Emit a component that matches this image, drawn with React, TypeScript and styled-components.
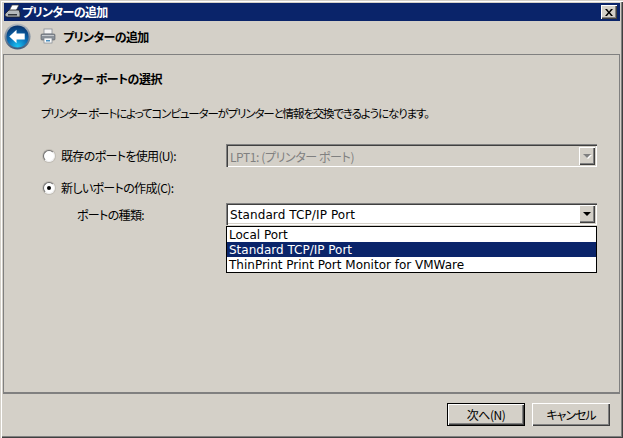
import React from 'react';
import styled, { createGlobalStyle } from 'styled-components';

const UI_FONT = `"Noto Sans CJK JP", "Noto Sans", sans-serif`;
const LATIN_FONT = `"DejaVu Sans", "Noto Sans CJK JP", sans-serif`;

const GlobalStyle = createGlobalStyle`
  html, body {
    margin: 0;
    padding: 0;
    background: #d4d0c8;
  }
  * {
    box-sizing: border-box;
  }
`;

const Window = styled.div`
  width: 623px;
  height: 438px;
  display: flex;
  flex-direction: column;
  padding: 3px 3px 3px 3px;
  background: #d4d0c8;
  box-shadow: inset 1px 1px 0 #d4d0c8, inset 2px 2px 0 #fff, inset -1px -1px 0 #404040, inset -2px -2px 0 #808080;
  font-family: ${UI_FONT};
  font-feature-settings: "palt" 1;
  font-size: 12px;
  letter-spacing: -0.65px;
  color: #000;
  overflow: hidden;
`;

const TitleBar = styled.div`
  height: 18px;
  flex: none;
  margin-left: 1px;
  padding: 0 3px 0 1px;
  background: #0a246a;
  color: #fff;
  display: flex;
  align-items: center;
  gap: 1px;
  font-weight: 700;
  line-height: 18px;
`;

const TitleText = styled.span`
  flex: 1;
`;

const CloseButton = styled.div`
  width: 16px;
  height: 14px;
  background: #d4d0c8;
  box-shadow: inset 1px 1px 0 #fff, inset -1px -1px 0 #404040, inset -2px -2px 0 #808080;
  display: flex;
  align-items: center;
  justify-content: center;
`;

const NavBar = styled.div`
  height: 33px;
  flex: none;
  display: flex;
  align-items: center;
  padding: 0 0 3px 1px;
`;

const NavTitle = styled.span`
  margin-left: 7px;
  font-weight: 700;
`;

const PrinterSlot = styled.div`
  margin-left: 9px;
  display: flex;
`;

const Panel = styled.div`
  flex: none;
  height: 340px;
  border-top: 1px solid #808080;
  border-left: 1px solid #808080;
  border-right: 1px solid #808080;
  border-bottom: 2px solid #808080;
  padding: 15px 0 0 37px;
`;

const Heading = styled.div`
  font-weight: 700;
  line-height: 18px;
  letter-spacing: -0.5px;
`;

const Description = styled.div`
  margin-top: 16px;
  line-height: 18px;
  height: 18px;
  font-size: 11.5px;
  letter-spacing: -1.15px;
  white-space: nowrap;
`;

const Form = styled.div`
  margin-top: 22px;
  display: flex;
  flex-direction: column;
`;

const FormRow = styled.div<{ $gap?: number }>`
  margin-top: ${(p) => p.$gap ?? 0}px;
  display: grid;
  grid-template-columns: 185px 371px;
  align-items: center;
`;

const RadioRow = styled.label`
  display: flex;
  align-items: center;
  gap: 6px;
  padding-left: 2px;
  line-height: 18px;
`;

const RadioCircle = styled.span<{ $checked?: boolean }>`
  width: 12px;
  height: 12px;
  flex: none;
  border-radius: 50%;
  background: #fff;
  border: 1px solid;
  border-color: #707070 #f0f0f0 #f0f0f0 #707070;
  box-shadow: 0 0 0 1px #c0bcb4;
  display: flex;
  align-items: center;
  justify-content: center;

  &::after {
    content: '';
    width: 4px;
    height: 4px;
    border-radius: 50%;
    background: ${(p) => (p.$checked ? '#000' : 'transparent')};
  }
`;

const FieldLabel = styled.div`
  padding: 2px 0 0 36px;
  line-height: 18px;
`;

const ComboWrap = styled.div`
  position: relative;
`;

const Combo = styled.div<{ $disabled?: boolean }>`
  height: ${(p) => (p.$disabled ? 23 : 22)}px;
  display: flex;
  align-items: center;
  padding: 0 2px 0 4px;
  background: ${(p) => (p.$disabled ? '#d4d0c8' : '#fff')};
  color: ${(p) => (p.$disabled ? '#808080' : '#000')};
  box-shadow: inset 1px 1px 0 #808080, inset 2px 2px 0 #404040, inset -1px -1px 0 #fff, inset -2px -2px 0 #d4d0c8;
`;

const ComboText = styled.span<{ $latin?: boolean }>`
  flex: 1;
  padding-top: 1px;
  font-family: ${(p) => (p.$latin ? LATIN_FONT : UI_FONT)};
  letter-spacing: ${(p) => (p.$latin ? '0.1px' : '-0.4px')};
  white-space: nowrap;
`;

const ComboButton = styled.div`
  width: 16px;
  height: 18px;
  background: #d4d0c8;
  box-shadow: inset 1px 1px 0 #fff, inset -1px -1px 0 #404040, inset -2px -2px 0 #808080;
  display: flex;
  align-items: center;
  justify-content: center;
`;

const Arrow = styled.span<{ $disabled?: boolean }>`
  width: 0;
  height: 0;
  border-left: 4px solid transparent;
  border-right: 4px solid transparent;
  border-top: 4px solid ${(p) => (p.$disabled ? '#808080' : '#000')};
  filter: ${(p) => (p.$disabled ? 'drop-shadow(1px 1px 0 #fff)' : 'none')};
`;

const DropList = styled.ul`
  position: absolute;
  top: 23px;
  left: 0;
  right: 0;
  height: 47px;
  margin: 0;
  padding: 0;
  list-style: none;
  background: #fff;
  border: 1px solid #000;
`;

const DropItem = styled.li<{ $selected?: boolean }>`
  height: 15px;
  line-height: 16px;
  padding-left: 2px;
  font-family: ${LATIN_FONT};
  letter-spacing: 0;
  white-space: nowrap;
  background: ${(p) => (p.$selected ? '#0a246a' : 'transparent')};
  color: ${(p) => (p.$selected ? '#fff' : '#000')};
`;

const Footer = styled.div`
  flex: 1;
  display: flex;
  justify-content: flex-end;
  gap: 7px;
  padding: 9px 10px 0 0;
`;

const Button = styled.div<{ $default?: boolean }>`
  width: 78px;
  height: 23px;
  background: #d4d0c8;
  display: flex;
  align-items: center;
  justify-content: center;
  letter-spacing: ${(p) => (p.$default ? '-0.5px' : '-1px')};
  border: ${(p) => (p.$default ? '1px solid #000' : 'none')};
  box-shadow: inset 1px 1px 0 #fff, inset -1px -1px 0 #404040, inset -2px -2px 0 #808080;
`;

function BackIcon() {
  return (
    <svg width="27" height="27" viewBox="0 0 28 28">
      <defs>
        <linearGradient id="ring" x1="0" y1="0" x2="0" y2="1">
          <stop offset="0" stopColor="#b8bcc0" />
          <stop offset="1" stopColor="#3c5a7c" />
        </linearGradient>
        <radialGradient id="ball" cx="0.5" cy="0.95" r="0.9">
          <stop offset="0" stopColor="#19c4f4" />
          <stop offset="0.5" stopColor="#0a70b8" />
          <stop offset="1" stopColor="#083670" />
        </radialGradient>
      </defs>
      <circle cx="14" cy="14" r="13.5" fill="url(#ring)" />
      <circle cx="14" cy="14" r="11.5" fill="url(#ball)" />
      <path d="M5.5 14 L13 7 V11 H21.5 V17 H13 V21 Z" fill="#fff" />
    </svg>
  );
}

function PrinterIcon({ size }: { size: number }) {
  return (
    <svg width={size} height={size} viewBox="0 0 16 16">
      <rect x="4" y="1" width="8" height="5" fill="#f4f4f4" stroke="#8a9098" strokeWidth="0.8" />
      <rect x="1" y="6" width="14" height="6" rx="1" fill="#8b9199" stroke="#555b62" strokeWidth="0.6" />
      <rect x="2" y="7" width="12" height="1" fill="#c6cace" />
      <rect x="4" y="10" width="8" height="5" fill="#fafafa" stroke="#7f8890" strokeWidth="0.7" />
      <rect x="6" y="12" width="4" height="1.5" fill="#4a90c0" />
    </svg>
  );
}

function TitlePrinterIcon() {
  return (
    <svg width="16" height="16" viewBox="0 0 16 16">
      <path d="M7 1 L14 1 L11 7 L4 7 Z" fill="#fff" stroke="#333" strokeWidth="0.7" />
      <path d="M0 10 L4 6 H14 L15 9 V13 H2 L0 12 Z" fill="#b4b8bc" stroke="#222" strokeWidth="0.8" />
      <rect x="3" y="10" width="9" height="1.5" fill="#30343a" />
    </svg>
  );
}

function CloseIcon() {
  return (
    <svg width="8" height="7" viewBox="0 0 8 7">
      <path d="M0 0 L2 0 L4 2.4 L6 0 L8 0 L5 3.5 L8 7 L6 7 L4 4.6 L2 7 L0 7 L3 3.5 Z" fill="#000" />
    </svg>
  );
}

export default function App() {
  return (
    <>
      <GlobalStyle />
      <Window>
        <TitleBar>
          <TitlePrinterIcon />
          <TitleText>プリンターの追加</TitleText>
          <CloseButton>
            <CloseIcon />
          </CloseButton>
        </TitleBar>

        <NavBar>
          <BackIcon />
          <PrinterSlot>
            <PrinterIcon size={16} />
          </PrinterSlot>
          <NavTitle>プリンターの追加</NavTitle>
        </NavBar>

        <Panel>
          <Heading>プリンター ポートの選択</Heading>
          <Description>プリンター ポートによってコンピューターがプリンターと情報を交換できるようになります。</Description>

          <Form>
            <FormRow>
              <RadioRow>
                <RadioCircle />
                既存のポートを使用(U):
              </RadioRow>
              <Combo $disabled>
                <ComboText>LPT1: (プリンター ポート)</ComboText>
                <ComboButton>
                  <Arrow $disabled />
                </ComboButton>
              </Combo>
            </FormRow>

            <FormRow $gap={12}>
              <RadioRow>
                <RadioCircle $checked />
                新しいポートの作成(C):
              </RadioRow>
            </FormRow>

            <FormRow $gap={6}>
              <FieldLabel>ポートの種類:</FieldLabel>
              <ComboWrap>
                <Combo>
                  <ComboText $latin>Standard TCP/IP Port</ComboText>
                  <ComboButton>
                    <Arrow />
                  </ComboButton>
                </Combo>
                <DropList>
                  <DropItem>Local Port</DropItem>
                  <DropItem $selected>Standard TCP/IP Port</DropItem>
                  <DropItem>ThinPrint Print Port Monitor for VMWare</DropItem>
                </DropList>
              </ComboWrap>
            </FormRow>
          </Form>
        </Panel>

        <Footer>
          <Button $default>次へ(N)</Button>
          <Button>キャンセル</Button>
        </Footer>
      </Window>
    </>
  );
}
